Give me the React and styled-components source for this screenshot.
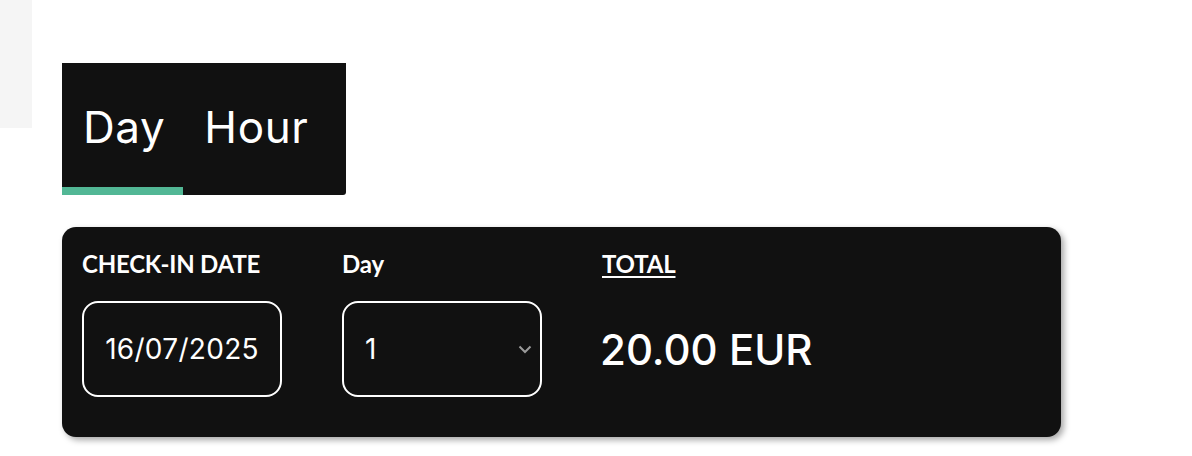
import React from "react";
import styled, { createGlobalStyle } from "styled-components";

const GlobalStyle = createGlobalStyle`
    body {
        margin: 0;
        background: #ffffff;
        font-family: "Inter", "Noto Sans", sans-serif;
    }
`;

const Page = styled.div`
    display: flex;
    align-items: flex-start;
    width: 1192px;
    height: 456px;
`;

const SideStrip = styled.div`
    width: 32px;
    height: 128px;
    background: #f5f5f5;
    flex-shrink: 0;
`;

const Content = styled.div`
    display: flex;
    flex-direction: column;
    align-items: flex-start;
    gap: 32px;
    padding: 63px 0 0 30px;
`;

const TabBar = styled.div`
    display: flex;
    align-items: stretch;
    height: 132px;
    padding-right: 20px;
    background: #111111;
    border-radius: 0 0 3px 0;
`;

const Tab = styled.div`
    display: flex;
    align-items: center;
    padding: 4px 18px 0 21px;
    font-family: "Inter", sans-serif;
    font-size: 44px;
    font-weight: 400;
    letter-spacing: 0.6px;
    color: #ffffff;
    border-bottom: 8px solid ${({ active }) => (active ? "#52b795" : "transparent")};
`;

const Card = styled.div`
    display: flex;
    gap: 60px;
    width: 999px;
    height: 210px;
    box-sizing: border-box;
    padding: 22px 20px 0 20px;
    background: #111111;
    border-radius: 14px;
    box-shadow: 3px 3px 6px rgba(0, 0, 0, 0.35);
`;

const Field = styled.div`
    display: flex;
    flex-direction: column;
    gap: 22px;
    width: ${({ wide }) => (wide ? "auto" : "200px")};
    white-space: nowrap;
`;

const Label = styled.div`
    font-family: "Lato", sans-serif;
    font-size: 24px;
    font-weight: 700;
    line-height: 30px;
    color: #ffffff;
    text-decoration: ${({ underline }) => (underline ? "underline" : "none")};
    text-underline-offset: 3px;
    text-decoration-thickness: 2px;
    letter-spacing: -0.2px;
`;

const InputBox = styled.div`
    display: flex;
    align-items: center;
    justify-content: ${({ center }) => (center ? "center" : "space-between")};
    height: 96px;
    box-sizing: border-box;
    border: 2px solid #ffffff;
    border-radius: 16px;
    font-family: "Inter", sans-serif;
    font-size: 28px;
    letter-spacing: 0.3px;
    color: #ffffff;
    padding: ${({ center }) => (center ? "0" : "0 8px 0 21px")};
`;

const Amount = styled.div`
    margin-top: 21px;
    font-family: "Inter", sans-serif;
    font-size: 42px;
    font-weight: 500;
    line-height: 56px;
    color: #ffffff;
    margin-left: -2px;
`;

const Chevron = () => (
    <svg width="14" height="9" viewBox="0 0 14 9">
        <path d="M1.5 1.5 L7 7 L12.5 1.5" fill="none" stroke="#9a9a9a" strokeWidth="2" />
    </svg>
);

export default function App() {
    return (
        <>
            <GlobalStyle />
            <Page>
                <SideStrip />
                <Content>
                    <TabBar>
                        <Tab active>Day</Tab>
                        <Tab>Hour</Tab>
                    </TabBar>
                    <Card>
                        <Field>
                            <Label>CHECK-IN DATE</Label>
                            <InputBox center>16/07/2025</InputBox>
                        </Field>
                        <Field>
                            <Label>Day</Label>
                            <InputBox>
                                <span>1</span>
                                <Chevron />
                            </InputBox>
                        </Field>
                        <Field wide>
                            <Label underline>TOTAL</Label>
                            <Amount>20.00 EUR</Amount>
                        </Field>
                    </Card>
                </Content>
            </Page>
        </>
    );
}
